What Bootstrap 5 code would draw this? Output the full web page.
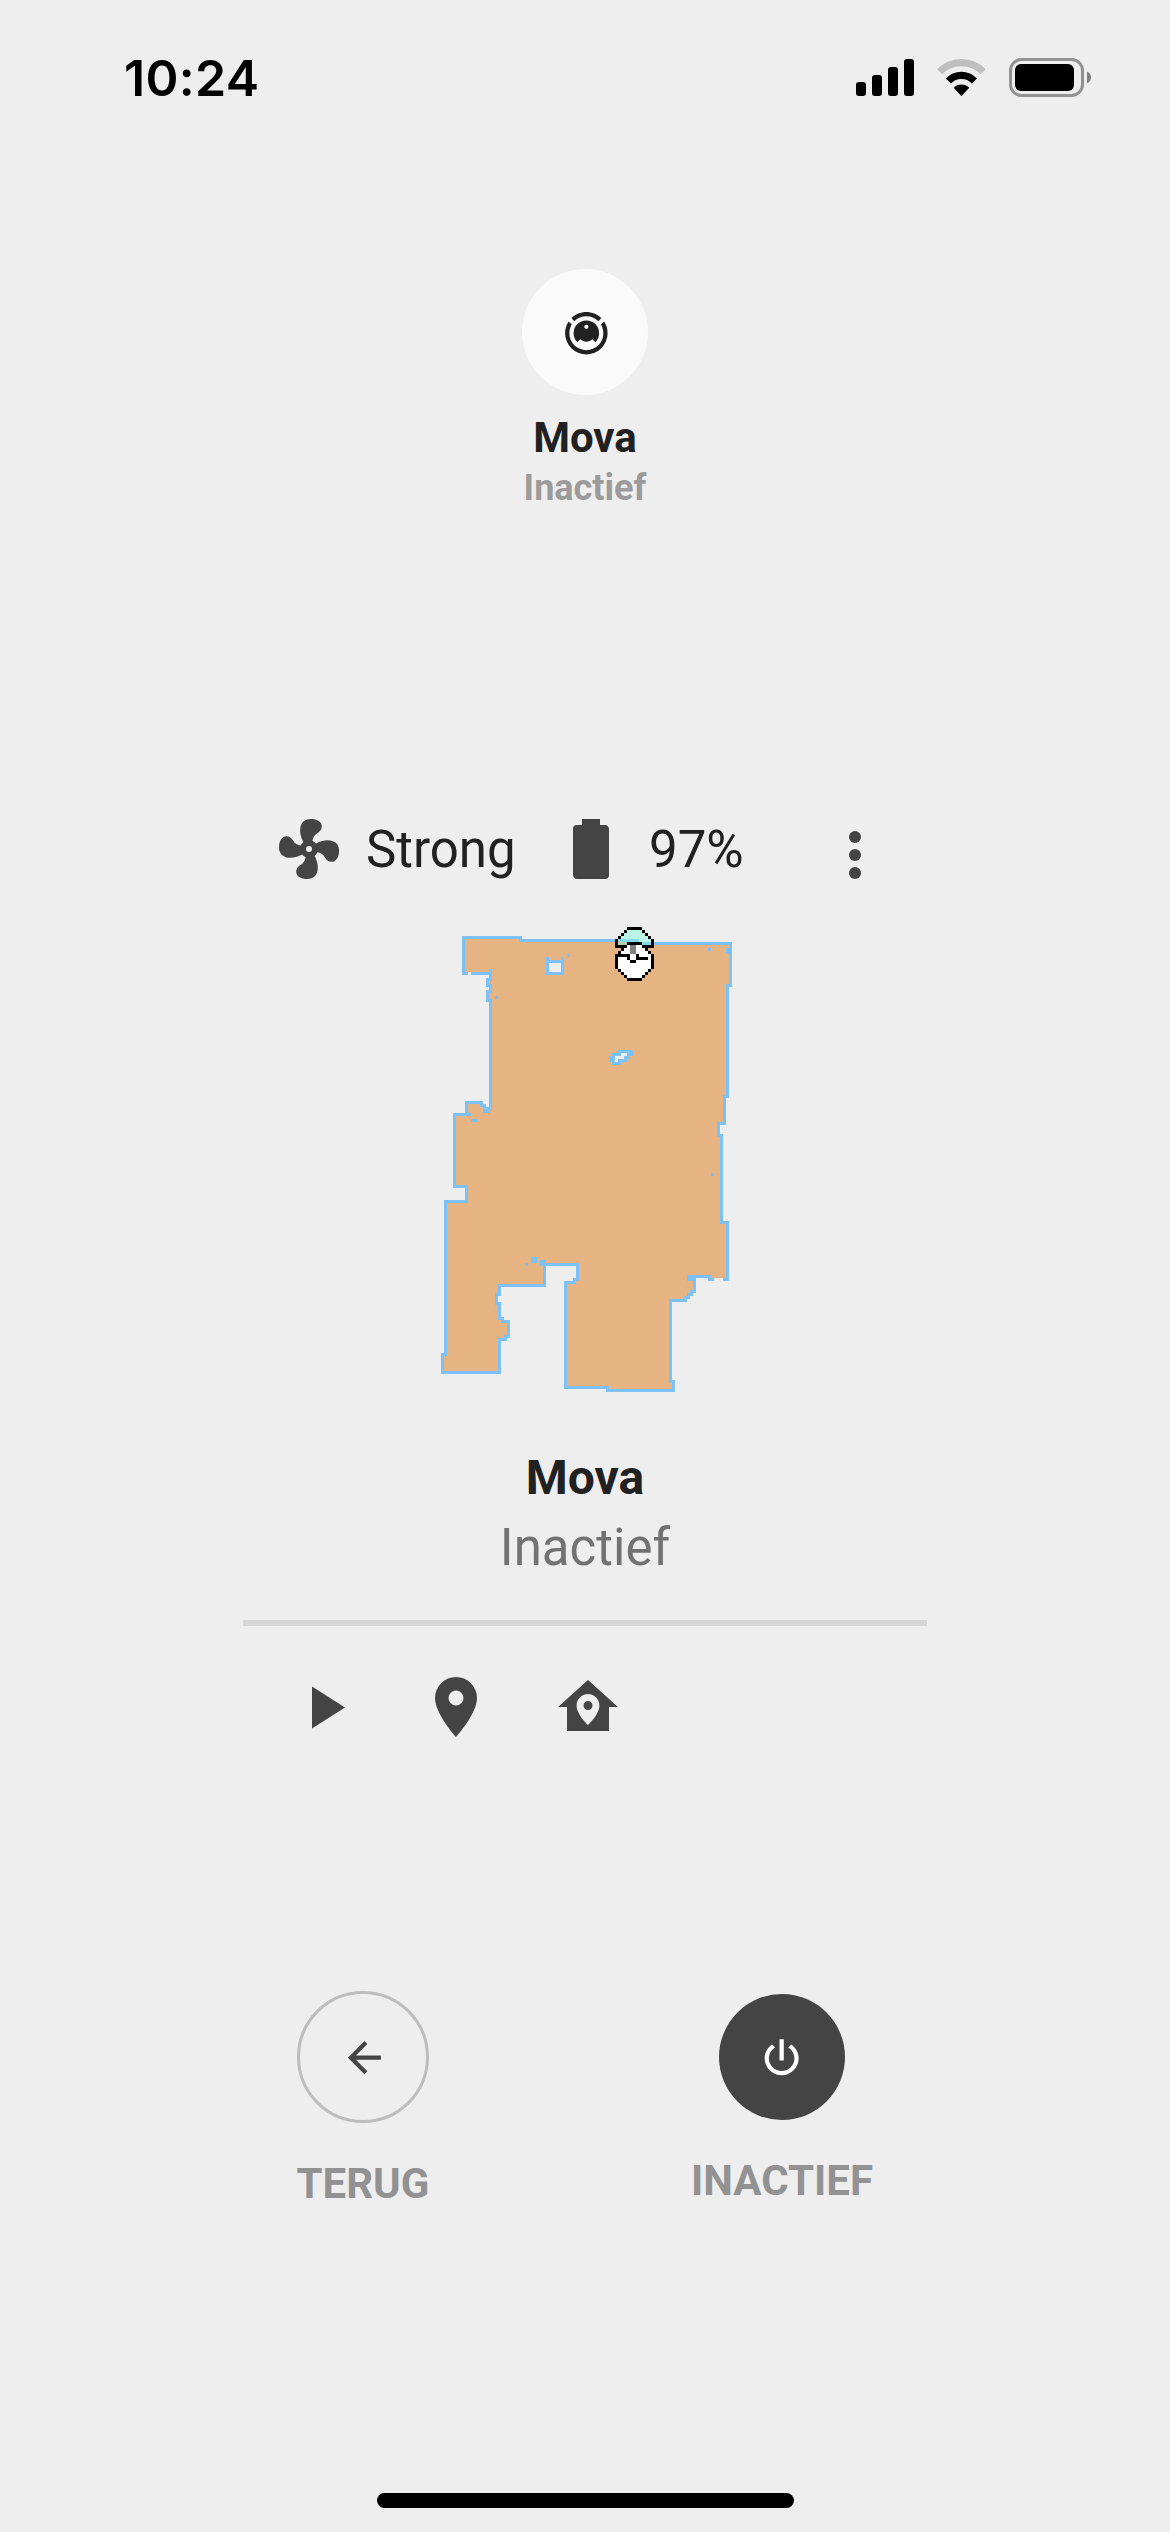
<!DOCTYPE html>
<html lang="nl">
<head>
<meta charset="utf-8">
<meta name="viewport" content="width=device-width, initial-scale=1">
<title>Mova</title>
<link rel="stylesheet" href="https://cdn.jsdelivr.net/npm/bootstrap@5.3.0/dist/css/bootstrap.min.css">
<style>
body { background: #eee; color: #212121; font-family: Roboto, sans-serif; }
svg { display: block; flex: none; }
.screen { width: 1170px; height: 2532px; overflow: hidden; }
.ink { color: #444; fill: currentColor; }
.status { height: 160px; padding: 2px 79px 0 124px; color: #000; }
.clock { font: 600 50px/60px Inter, sans-serif; letter-spacing: .3px; margin-top: 46px; }
.status-icons { margin-top: 54px; }
.device-head { padding-top: 109px; height: 659px; }
.avatar { width: 126px; height: 126px; background: #fafafa; }
.head-name { font-size: 42px; line-height: 50px; margin-top: 18px; }
.head-state { font-size: 36px; line-height: 42px; margin-top: 4px; color: #9b9b9b; }
.panel { width: 684px; }
.toolbar { height: 72px; margin-top: -6px; padding-left: 30px; padding-right: 36px; font-size: 51px; line-height: 60px; }
.fan-text { width: 189px; margin: 2px 0 0 21px; }
.battery-text { margin: 2px 0 0 22px; }
.map-view { margin-top: 27px; }
.panel-name { font-size: 48px; line-height: 58px; margin-top: 51px; }
.panel-state { font-size: 51px; line-height: 60px; margin-top: 11px; color: #727272; }
.rule { height: 6px; background: #d6d6d6; margin-top: 42px; }
.actions { gap: 60px; padding: 45px 0 0 45px; }
.round-actions { height: 460px; padding: 248px 25px 0 0; gap: 179px; }
.action-cell { width: 240px; }
.ring { width: 132px; height: 132px; border: 3px solid #bdbdbd; }
.disc { width: 126px; height: 126px; background: #444; color: #fff; fill: #fff; margin-top: 3px; }
.caption-text { font-size: 42px; line-height: 50px; color: #929292; margin-top: 36px; }
.home-bar { width: 417px; height: 15px; background: #000; margin: auto 0 24px 1px; }
</style>
<script src="https://cdn.jsdelivr.net/npm/bootstrap@5.3.0/dist/js/bootstrap.bundle.min.js"></script>
</head>
<body>
<div class="screen d-flex flex-column align-items-center">

  <header class="status w-100 d-flex justify-content-between align-items-start">
    <div class="clock">10:24</div>
    <div class="status-icons">
      <svg width="236" height="42" viewBox="855 56 236 42">
        <g><rect x="856" y="82" width="10" height="14" rx="3"/><rect x="872" y="75" width="10" height="21" rx="3"/><rect x="888" y="67" width="10" height="29" rx="3"/><rect x="904" y="59" width="10" height="37" rx="3"/></g>
        <g fill="none" stroke-width="7.2">
          <path stroke="#bfbfbf" d="M939.6 71.8A30.6 30.6 0 0 1 983.2 71.8"/>
          <path stroke="#000" d="M948.4 80.9A18 18 0 0 1 974.4 80.9"/>
        </g>
        <path d="M954.2 88.3C953.6 87.7 953.7 87.3 954.3 86.9A11.5 11.5 0 0 1 968.6 86.9C969.2 87.3 969.3 87.7 968.7 88.3L962.1 95.4Q961.4 96 960.8 95.4Z"/>
        <rect x="1010.5" y="59.5" width="72" height="36" rx="11" fill="none" stroke="#929292" stroke-width="3"/>
        <rect x="1015" y="64" width="59" height="27" rx="6"/>
        <path fill="#808080" d="M1087 71.5Q1091 73 1091 77.300T1087 83.300Z"/>
      </svg>
    </div>
  </header>

  <section class="device-head d-flex flex-column align-items-center">
    <div class="avatar rounded-circle d-flex align-items-center justify-content-center">
      <svg width="51" height="51" viewBox="-.4 -.3 24 24" fill="#212121"><path d="M12,2C14.65,2 17.19,3.06 19.07,4.93L17.65,6.35C16.15,4.85 14.12,4 12,4C9.88,4 7.84,4.84 6.35,6.35L4.93,4.93C6.81,3.06 9.35,2 12,2M3.66,6.5L5.11,7.94C4.39,9.17 4,10.57 4,12A8,8 0 0,0 12,20A8,8 0 0,0 20,12C20,10.57 19.61,9.17 18.88,7.94L20.34,6.5C21.42,8.12 22,10.04 22,12A10,10 0 0,1 12,22A10,10 0 0,1 2,12C2,10.04 2.58,8.12 3.66,6.5M12,6A6,6 0 0,1 18,12C18,13.59 17.37,15.12 16.24,16.24L14.83,14.83C14.08,15.58 13.06,16 12,16C10.94,16 9.92,15.58 9.17,14.83L7.76,16.24C6.63,15.12 6,13.59 6,12A6,6 0 0,1 12,6M12,8A1,1 0 0,0 11,9A1,1 0 0,0 12,10A1,1 0 0,0 13,9A1,1 0 0,0 12,8Z"/></svg>
    </div>
    <div class="head-name fw-bold">Mova</div>
    <div class="head-state fw-bold">Inactief</div>
  </section>

  <main class="panel">
    <div class="toolbar d-flex align-items-center">
      <svg class="ink" width="72" height="72" viewBox="0 0 24 24"><path d="M12,11A1,1 0 0,0 11,12A1,1 0 0,0 12,13A1,1 0 0,0 13,12A1,1 0 0,0 12,11M12.5,2C17,2 17.11,5.57 14.75,6.75C13.76,7.24 13.32,8.29 13.13,9.22C13.61,9.42 14.03,9.73 14.35,10.13C18.05,8.13 22.03,8.92 22.03,12.5C22.03,17 18.46,17.1 17.28,14.73C16.78,13.74 15.72,13.3 14.79,13.11C14.59,13.59 14.28,14 13.88,14.34C15.87,18.03 15.08,22 11.5,22C7,22 6.91,18.42 9.27,17.24C10.25,16.75 10.69,15.71 10.89,14.79C10.4,14.59 9.97,14.27 9.65,13.87C5.96,15.85 2,15.07 2,11.5C2,7 5.56,6.89 6.74,9.26C7.24,10.25 8.29,10.68 9.22,10.87C9.41,10.39 9.73,9.97 10.14,9.65C8.15,5.96 8.94,2 12.5,2Z"/></svg>
      <span class="fan-text">Strong</span>
      <svg class="ink" width="72" height="72" viewBox="0 0 24 24"><path d="M16.67,4H15V2H9V4H7.33A1.33,1.33 0 0,0 6,5.33V20.67C6,21.4 6.6,22 7.33,22H16.67A1.33,1.33 0 0,0 18,20.67V5.33C18,4.6 17.4,4 16.67,4Z"/></svg>
      <span class="battery-text">97%</span>
      <svg class="ink ms-auto" width="72" height="72" viewBox="0 -2 24 24"><circle cx="12" cy="6" r="2"/><circle cx="12" cy="12" r="2"/><circle cx="12" cy="18" r="2"/></svg>
    </div>

    <!-- floor plan: one unit per map cell -->
    <svg class="map-view mx-auto" width="306" height="486" viewBox="0 0 102 162" shape-rendering="crispEdges">
      <g transform="translate(.5 .5)" stroke-linejoin="miter">
        <path fill="#e6b382" stroke="#7dc1f9" stroke-width="1" d="M10 8H29V9H68V10H99V24H98V61H97V70H95V74H96V103H98V121H87V126H86V127H85V128H84V129H79V156H80V159H58V158H44V123H47V122H48V117H37V124H22V127H21V130H22V135H23V136H25V141H24V142H22V153H3V147H4V96H11V91H7V67H11V63H16V64H17V65H19V29H18V26H19V24H18V22H19V20H10Z"/>
      </g>
      <g fill="#7dc1f9">
        <path d="M12 67h1v1h-1zM17 65h2v2h-2zM19 19h1v1h-1zM13 69h2v1h-2zM21 28h1v1h-1zM45 14h1v1h-1zM92 12h1v1h-1zM98 12h1v2h-1zM93 87h1v1h-1zM33 115h2v2h-2zM31 117h1v1h-1zM36 116h2v2h-2zM85 121h3v2h-3zM92 122h2v1h-2zM97 122h2v1h-2z"/>
        <path d="M38 15h1v1h4v-1h1v6h-6zM62 46h5v2h-1v1h-1v1h-2v1h-3v-1h-1v-2h1v-1h2z"/>
      </g>
      <path fill="#e6b382" d="M93 121h5v1h-5z"/>
      <path fill="#eee" d="M12 20h1v1h-1zM39 17h4v3h-4zM63 47h2v1h-1v1h-2v1h-1v-2h2z"/>
      <!-- dock -->
      <path fill="#baf4e4" d="M65 6h5v1h1v1h1v1h1v2H62V9h1V8h1V7h1z"/>
      <path fill="#84daea" d="M62 9h7v1h-7zM70 10h3v1h-3z"/>
      <path fill="#acd3ab" d="M62 10h3v1h-3z"/>
      <!-- vacuum -->
      <path fill="#fff" d="M65 11h5v1h1v1h1v1h1v5h-1v1h-1v1h-1v1h-5v-1h-1v-1h-1v-1h-1v-5h1v-1h1v-1h1z"/>
      <path fill="#808080" d="M66 11h2v3h-2z"/>
      <path fill="#000" d="M65 5h5v1h-5zM64 6h1v1h-1zM70 6h1v1h-1zM63 7h1v1h-1zM71 7h1v1h-1zM62 8h1v1h-1zM72 8h1v1h-1zM61 9h1v2h3v-1h5v1h3V9h1v3h-4v-1h-5v1h-4zM63 12h1v1h-1zM71 12h1v1h-1zM62 13h1v1h-1zM72 13h1v1h-1zM61 14h5v2h-1v-1h-3v4h-1zM66 16h2v1h-2zM68 14h1v1h3v1h-4zM73 14h1v5h-1zM62 19h1v1h-1zM72 19h1v1h-1zM63 20h1v1h-1zM71 20h1v1h-1zM64 21h1v1h-1zM70 21h1v1h-1zM65 22h5v1h-5z"/>
    </svg>

    <div class="panel-name fw-bold text-center">Mova</div>
    <div class="panel-state text-center">Inactief</div>
    <div class="rule"></div>
    <div class="actions d-flex">
      <svg class="ink" width="72" height="72" viewBox="0 0 24 24"><path d="M8,5.14V19.14L19,12.14Z"/></svg>
      <svg class="ink" width="72" height="72" viewBox="0 0 24 24"><path d="M12,11.5A2.5,2.5 0 0,1 9.5,9A2.5,2.5 0 0,1 12,6.5A2.5,2.5 0 0,1 14.5,9A2.5,2.5 0 0,1 12,11.5M12,2A7,7 0 0,0 5,9C5,14.25 12,22 12,22C12,22 19,14.25 19,9A7,7 0 0,0 12,2Z"/></svg>
      <svg class="ink" width="72" height="72" viewBox="0 0 24 24"><path d="M12,3L2,12H5V20H19V12H22L12,3M12,7.7C14.1,7.7 15.8,9.4 15.8,11.5C15.8,14.5 12,18 12,18C12,18 8.2,14.5 8.2,11.5C8.2,9.4 9.9,7.7 12,7.7M12,10A1.5,1.5 0 0,0 10.5,11.5A1.5,1.5 0 0,0 12,13A1.5,1.5 0 0,0 13.5,11.5A1.5,1.5 0 0,0 12,10Z"/></svg>
    </div>
  </main>

  <nav class="round-actions d-flex justify-content-center align-items-start">
    <div class="action-cell d-flex flex-column align-items-center">
      <div class="ring rounded-circle d-flex align-items-center justify-content-center">
        <svg class="ink" width="50" height="50" viewBox="-.6 -.3 24 24"><path d="M20,11V13H8L13.5,18.5L12.08,19.92L4.16,12L12.08,4.08L13.5,5.5L8,11H20Z"/></svg>
      </div>
      <div class="caption-text fw-bold">TERUG</div>
    </div>
    <div class="action-cell d-flex flex-column align-items-center">
      <div class="disc rounded-circle d-flex align-items-center justify-content-center">
        <svg width="51" height="51" viewBox=".4 -.4 24 24"><path d="M16.56,5.44L15.11,6.89C16.84,7.94 18,9.83 18,12A6,6 0 0,1 12,18A6,6 0 0,1 6,12C6,9.83 7.16,7.94 8.88,6.88L7.44,5.44C5.36,6.88 4,9.28 4,12A8,8 0 0,0 12,20A8,8 0 0,0 20,12C20,9.28 18.64,6.88 16.56,5.44M13,3H11V13H13"/></svg>
      </div>
      <div class="caption-text fw-bold">INACTIEF</div>
    </div>
  </nav>

  <div class="home-bar rounded-pill"></div>
</div>
</body>
</html>
